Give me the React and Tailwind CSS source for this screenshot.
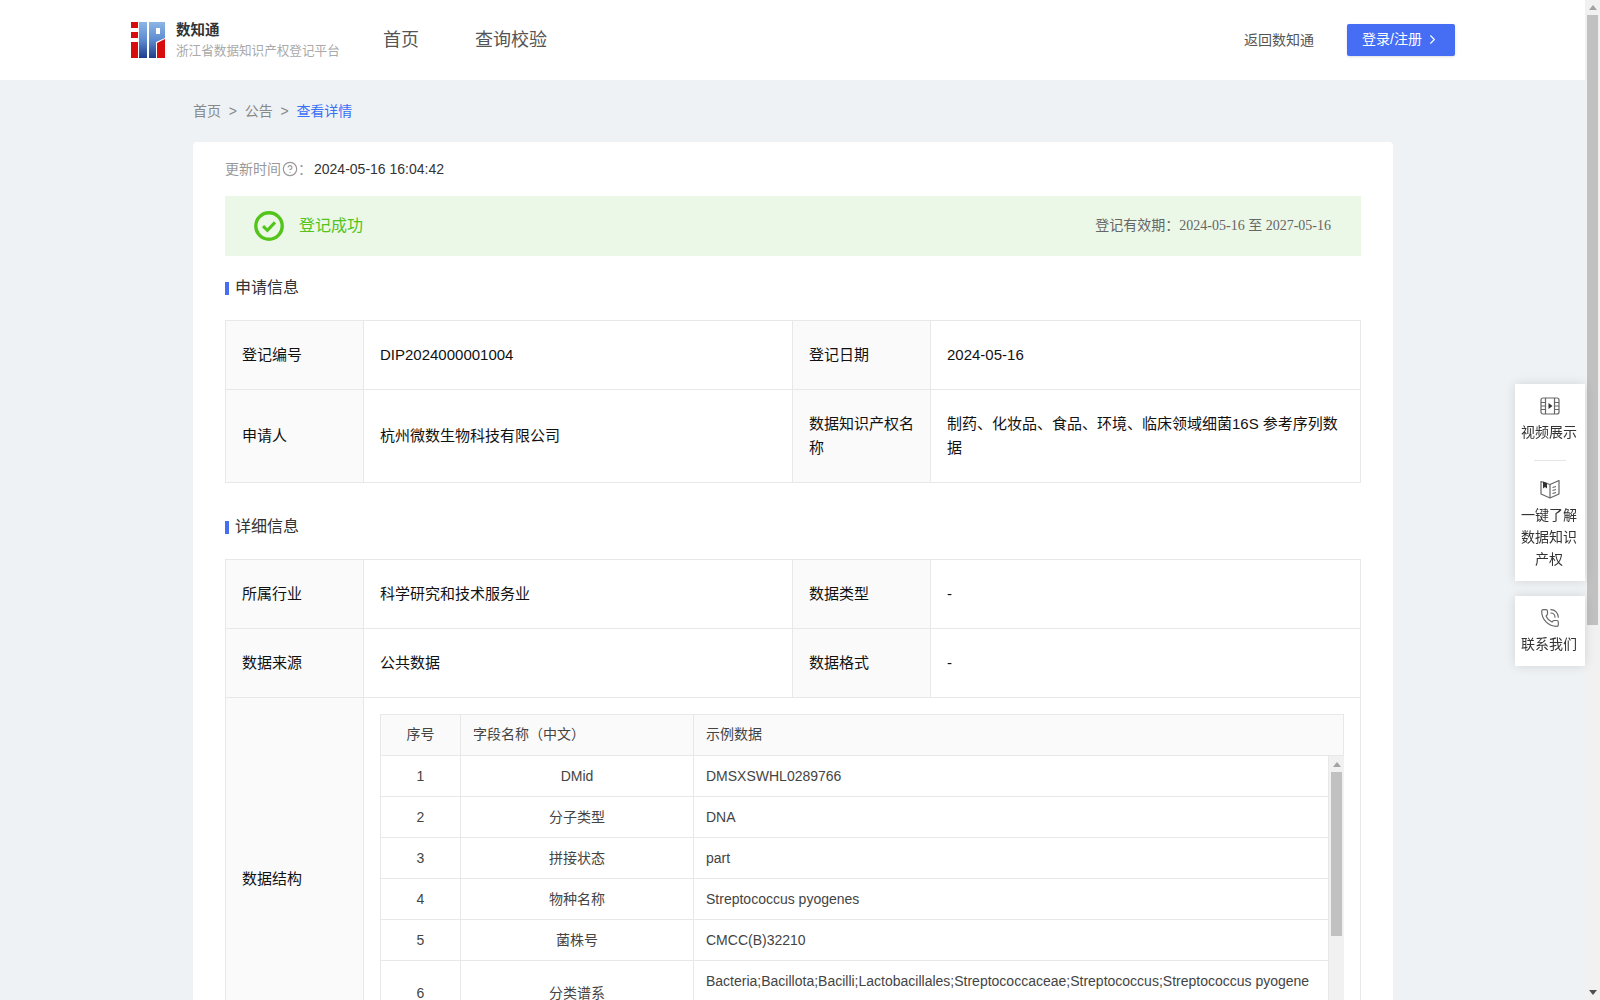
import { ChevronRight, CircleHelp, PhoneCall } from 'lucide-react';

const fields = [
  ['1', 'DMid', 'DMSXSWHL0289766'],
  ['2', '分子类型', 'DNA'],
  ['3', '拼接状态', 'part'],
  ['4', '物种名称', 'Streptococcus pyogenes'],
  ['5', '菌株号', 'CMCC(B)32210'],
  ['6', '分类谱系', 'Bacteria;Bacillota;Bacilli;Lactobacillales;Streptococcaceae;Streptococcus;Streptococcus pyogenes'],
];

function Logo() {
  return (
    <svg width="34" height="36" viewBox="0 0 34 36" className="shrink-0">
      <defs>
        <linearGradient id="logoBlue" x1="0" y1="0" x2="0" y2="1">
          <stop offset="0" stopColor="#8db6e6" />
          <stop offset="0.5" stopColor="#5d8bcf" />
          <stop offset="1" stopColor="#1f3c8c" />
        </linearGradient>
      </defs>
      <rect x="0" y="0" width="7" height="6" fill="#d80c0c" />
      <rect x="0" y="10" width="7" height="6" fill="#d80c0c" />
      <rect x="0" y="20" width="7" height="16" fill="#d80c0c" />
      <rect x="8" y="0" width="8" height="36" fill="url(#logoBlue)" />
      <path d="M18 0H34V16L25 20V36H18Z" fill="url(#logoBlue)" />
      <rect x="25" y="6" width="4" height="6" fill="#fff" />
      <path d="M26 21L34 17V36H26Z" fill="#d80c0c" />
    </svg>
  );
}

function VideoIcon() {
  return (
    <svg width="20" height="18" viewBox="0 0 20 18" fill="none" stroke="#666" strokeWidth="1.2">
      <rect x="1" y="1" width="18" height="16" rx="2" />
      <path d="M5.5 1V17M14.5 1V17M1 5.5H5.5M1 9H5.5M1 12.5H5.5M14.5 5.5H19M14.5 9H19M14.5 12.5H19" />
      <path d="M8.5 6L12.5 9L8.5 12Z" fill="#333" stroke="none" />
    </svg>
  );
}

function BookIcon() {
  return (
    <svg width="20" height="20" viewBox="0 0 20 20" fill="none" stroke="#666" strokeWidth="1.2">
      <path d="M1 2.5L10 5.5L19 1.5V15L10 19L1 15Z" strokeLinejoin="round" />
      <path d="M10 5.5V19M12.5 8.5L16 7.5M12.5 11.5L16 10.5M12.5 14.5L16 13.5" />
      <path d="M3 2.5L7 4V9.5L5 8L3 9.5Z" fill="#333" stroke="none" />
    </svg>
  );
}

function CheckCircle() {
  return (
    <svg width="30" height="30" viewBox="0 0 30 30" fill="none" stroke="#52c41a" className="shrink-0">
      <circle cx="15" cy="15" r="13.2" strokeWidth="3.4" />
      <path d="M9 15.2L13.4 19.4L21 11.4" strokeWidth="3" />
    </svg>
  );
}

function SectionTitle({ children, className }) {
  return (
    <div className={`flex h-6 items-center ${className}`}>
      <span className="mt-[3px] h-[13px] w-1 bg-[#456ef4]" />
      <span className="mt-px ml-[6px] text-base leading-6 text-[#333]">{children}</span>
    </div>
  );
}

function Label({ children }) {
  return (
    <td className="border border-[#e8e8e8] bg-[#fafafa] px-4 py-[22px] align-middle text-[15px] leading-6 text-[#111]">
      {children}
    </td>
  );
}

function Value({ children }) {
  return <td className="border border-[#e8e8e8] px-4 py-[22px] align-middle text-[15px] leading-6 text-[#111]">{children}</td>;
}

function InfoColumns() {
  return (
    <colgroup>
      <col className="w-[138px]" />
      <col className="w-[429px]" />
      <col className="w-[138px]" />
      <col />
    </colgroup>
  );
}

function FieldTable() {
  return (
    <div className="border-t border-l border-[#e8e8e8] text-[#444]">
      <div className="grid h-[41px] grid-cols-[80px_233px_1fr] border-r border-b border-[#e8e8e8] bg-[#fafafa] leading-[39px]">
        <div className="border-r border-[#e8e8e8] text-center">序号</div>
        <div className="border-r border-[#e8e8e8] px-3">字段名称（中文）</div>
        <div className="px-3">示例数据</div>
      </div>
      <div className="flex h-[288px] overflow-hidden border-b border-[#e8e8e8]">
        <div className="min-w-0 flex-1">
          {fields.map((row) => (
            <div key={row[0]} className="grid grid-cols-[80px_233px_1fr] border-r border-b border-[#e8e8e8]">
              <div className="flex items-center justify-center border-r border-[#e8e8e8]">{row[0]}</div>
              <div className="flex items-center justify-center border-r border-[#e8e8e8]">{row[1]}</div>
              <div className="break-all py-2 pr-4 pl-3 leading-6">{row[2]}</div>
            </div>
          ))}
        </div>
        <div className="flex w-[15px] shrink-0 flex-col items-center bg-[#f1f1f1]">
          <span className="mt-[6px] h-0 w-0 border-x-[4px] border-b-[5px] border-x-transparent border-b-[#a3a3a3]" />
          <span className="mt-[5px] h-[164px] w-[11px] bg-[#c1c1c1]" />
        </div>
      </div>
    </div>
  );
}

export default function App() {
  return (
    <div className="flex h-screen overflow-hidden bg-[#f1f1f1] font-['Liberation_Sans','Noto_Sans_CJK_SC',sans-serif] text-sm">
      <div className="h-full w-[1585px] shrink-0 overflow-hidden bg-[#eef2f5]">
        <header className="flex h-20 items-center bg-white pr-[130px] pl-[131px]">
          <Logo />
          <div className="ml-[11px] w-[164px]">
            <div className="text-[14.5px] leading-[18px] font-bold text-[#333]">数知通</div>
            <div className="mt-[3px] text-[12.6px] leading-[18px] whitespace-nowrap text-[#aaa]">
              浙江省数据知识产权登记平台
            </div>
          </div>
          <nav className="ml-[43px] flex gap-[56px] text-lg text-[#555]">
            <span>首页</span>
            <span>查询校验</span>
          </nav>
          <span className="ml-auto text-[#555]">返回数知通</span>
          <button className="ml-[33px] flex h-8 w-[108px] items-center justify-center rounded-[2px] bg-[#456ef4] pb-[2px] text-white shadow-sm">
            登录/注册
            <ChevronRight size={15} strokeWidth={1.75} className="ml-[3px]" />
          </button>
        </header>

        <div className="ml-[193px] w-[1200px]">
          <div className="flex h-[62px] items-center gap-[7.75px] text-[#888]">
            <span>首页</span>
            <span>&gt;</span>
            <span>公告</span>
            <span>&gt;</span>
            <span className="text-[#3b6ff5]">查看详情</span>
          </div>

          <div className="rounded-t bg-white pr-8 pb-6 pl-8">
            <div className="flex h-[54px] items-center">
              <span className="text-[#999]">更新时间</span>
              <CircleHelp size={16} strokeWidth={1.75} className="ml-px text-[#999]" />
              <span className="w-4 text-[#999]">：</span>
              <span className="text-[#333]">2024-05-16 16:04:42</span>
            </div>

            <div className="flex h-[60px] items-center bg-[#ebf7e7] pr-[30px] pl-[29px]">
              <CheckCircle />
              <span className="ml-[15px] -mt-px text-base text-[#52c41a]">登记成功</span>
              <span className="ml-auto -mt-px text-[#666]">
                登记有效期：<span className="font-['Liberation_Serif','Noto_Sans_CJK_SC',serif]">2024-05-16 至 2027-05-16</span>
              </span>
            </div>

            <SectionTitle className="mt-[19px] mb-[21px]">申请信息</SectionTitle>
            <table className="w-full table-fixed border-collapse">
              <InfoColumns />
              <tbody>
                <tr>
                  <Label>登记编号</Label>
                  <Value>DIP2024000001004</Value>
                  <Label>登记日期</Label>
                  <Value>2024-05-16</Value>
                </tr>
                <tr>
                  <Label>申请人</Label>
                  <Value>杭州微数生物科技有限公司</Value>
                  <Label>数据知识产权名称</Label>
                  <Value>制药、化妆品、食品、环境、临床领域细菌16S 参考序列数据</Value>
                </tr>
              </tbody>
            </table>

            <SectionTitle className="mt-[31px] mb-[21px]">详细信息</SectionTitle>
            <table className="w-full table-fixed border-collapse">
              <InfoColumns />
              <tbody>
                <tr>
                  <Label>所属行业</Label>
                  <Value>科学研究和技术服务业</Value>
                  <Label>数据类型</Label>
                  <Value>-</Value>
                </tr>
                <tr>
                  <Label>数据来源</Label>
                  <Value>公共数据</Value>
                  <Label>数据格式</Label>
                  <Value>-</Value>
                </tr>
                <tr>
                  <Label>数据结构</Label>
                  <td colSpan={3} className="border border-[#e8e8e8] p-4">
                    <FieldTable />
                  </td>
                </tr>
              </tbody>
            </table>
          </div>
        </div>
      </div>

      <aside className="fixed top-[384px] right-[15px] flex w-[70px] flex-col gap-[15px] text-center leading-[22px] text-[#333]">
        <div className="flex h-[197px] flex-col items-center bg-white px-[6px] pt-[13px] shadow-[0_0_10px_rgba(0,0,0,0.12)]">
          <VideoIcon />
          <div className="mt-[6px] pr-[2px]">视频展示</div>
          <div className="mt-[17px] h-px w-8 bg-[#e5e5e5]" />
          <div className="mt-[18px]">
            <BookIcon />
          </div>
          <div className="mt-[5px] pr-[2px]">一键了解数据知识产权</div>
        </div>
        <div className="flex h-[70px] flex-col items-center bg-white px-[6px] pt-3 shadow-[0_0_10px_rgba(0,0,0,0.12)]">
          <PhoneCall size={20} strokeWidth={1.4} className="text-[#666]" />
          <div className="mt-[5px] pr-[2px]">联系我们</div>
        </div>
      </aside>

      <div className="flex w-[15px] shrink-0 flex-col items-center bg-[#f1f1f1]">
        <span className="mt-[5px] h-0 w-0 border-x-[4px] border-b-[5px] border-x-transparent border-b-[#a3a3a3]" />
        <span className="mt-[5px] h-[610px] w-[11px] bg-[#c1c1c1]" />
        <span className="mt-auto mb-[5px] h-0 w-0 border-x-[4px] border-t-[5px] border-x-transparent border-t-[#505050]" />
      </div>
    </div>
  );
}
